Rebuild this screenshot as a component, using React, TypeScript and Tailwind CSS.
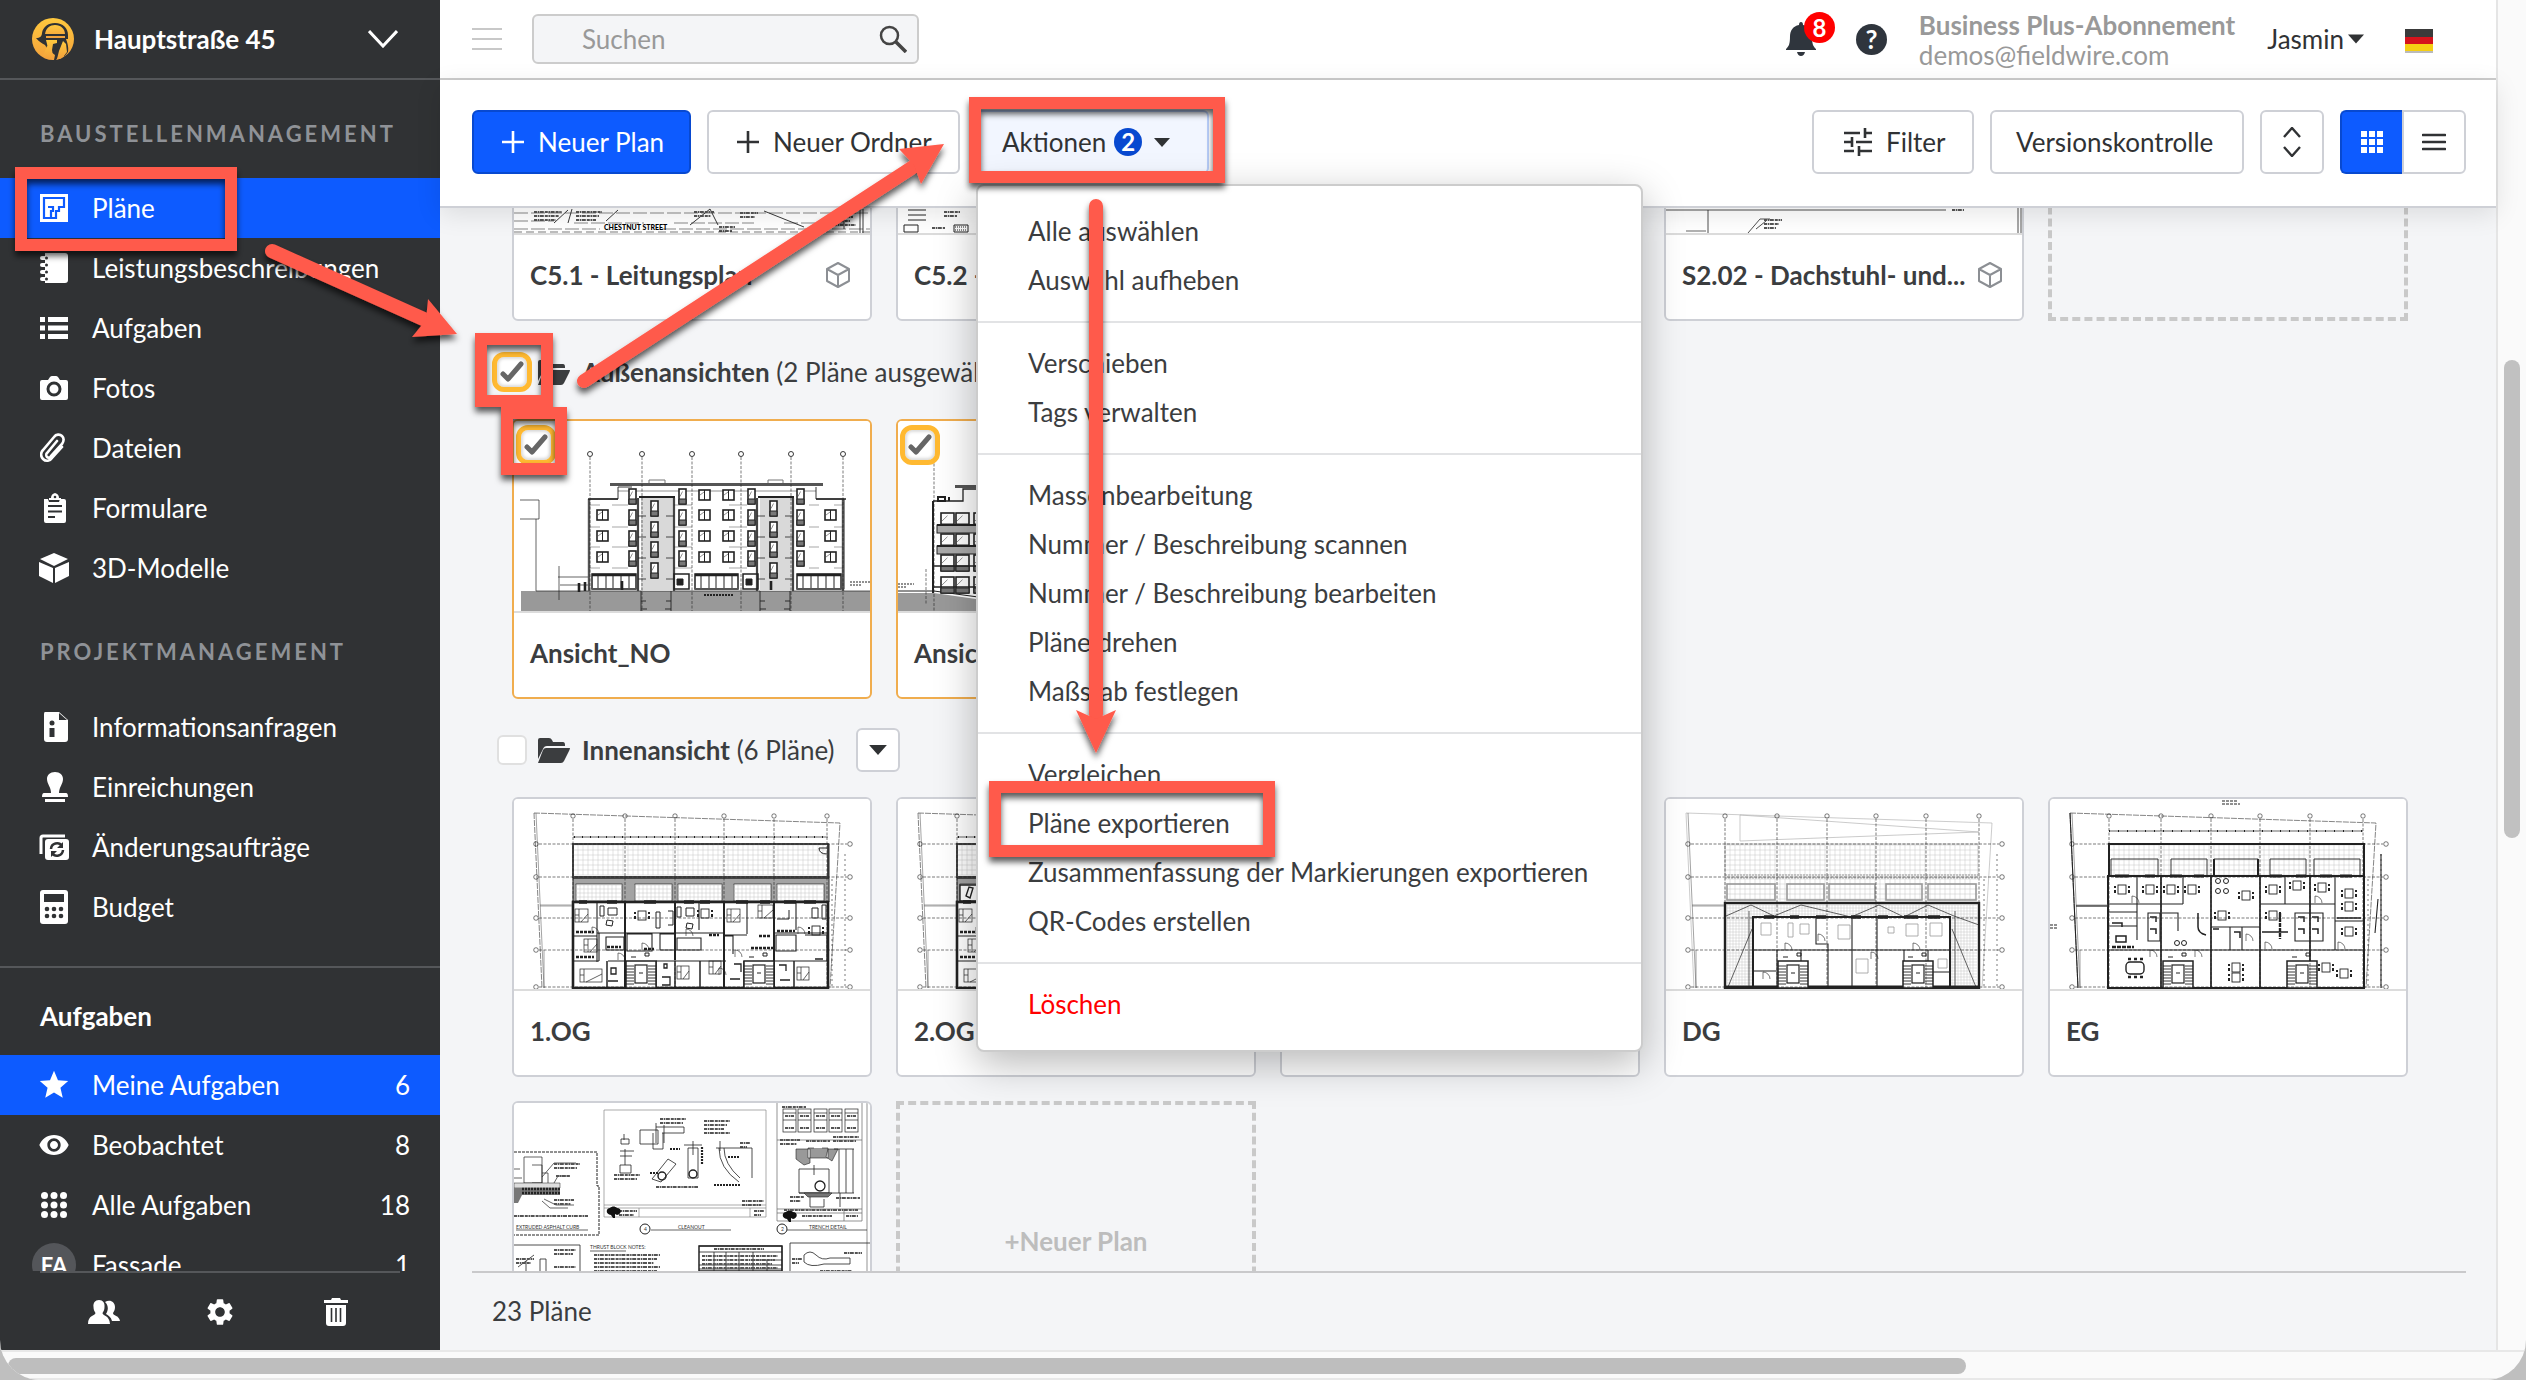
import React from "react";
import { MdSettings, MdStar, MdVisibility } from "react-icons/md";

type IconProps = { className?: string };

/* ---------- icons ---------- */

const Logo = () => (
  <svg viewBox="0 0 42 42" className="size-[42px]" aria-hidden="true">
    <defs>
      <linearGradient id="logoFill" x1="0" y1="0" x2="0" y2="1">
        <stop offset="0" stopColor="#ffc93e" />
        <stop offset="1" stopColor="#f3a13c" />
      </linearGradient>
    </defs>
    <circle cx="21" cy="21" r="21" fill="url(#logoFill)" />
    <path d="M4 20c4 0 6-2 6-5C11 9 16 5 23 5c8 0 13 5 13 12v4h-2c1 3 3 8 2 13l-4 5-1-9-4 8-3 4h-2l1-5-4-3c-3-1-4-4-6-7-3-2-6-3-9-7z" fill="#303234" />
    <path d="M13 16c1-6 5-9 10-9 6 0 10 4 10 9zM14 18h19v2H14z" fill="url(#logoFill)" />
    <path d="M14 22h11v3l-4 1-1 6-4-1-1-5zM15 28l5 4 1 6-4 3-6-3z" fill="url(#logoFill)" />
    <path d="M31 23l3 3 1 8-3 4-4 3h-3l2-8z" fill="url(#logoFill)" />
  </svg>
);

const PlanIcon = () => (
  <svg viewBox="0 0 28 28" className="size-7" aria-hidden="true">
    <path d="M0 0h28v28H0z" fill="#fff" />
    <path d="M24 14V4H4v20h12v-7h3v-5M8 13h5v4h-2v7M24 13h-5" fill="none" stroke="#0d5bff" strokeWidth="2.200" />
  </svg>
);
const NotebookIcon = () => (
  <svg viewBox="0 0 28 30" className="h-[30px] w-7" aria-hidden="true">
    <path d="M5 0h20a3 3 0 0 1 3 3v24a3 3 0 0 1-3 3H5z" fill="#fff" />
    {[4, 11, 18, 25].map((y) => (
      <g key={y}>
        <rect x="0" y={y - 1} width="8" height="4" rx="2" fill="#fff" />
        <circle cx="6.500" cy={y + 1} r="1.500" fill="#303234" />
      </g>
    ))}
  </svg>
);
const ListIcon = () => (
  <svg viewBox="0 0 28 22" className="h-[22px] w-7" fill="#fff" aria-hidden="true">
    {[0, 8.5, 17].map((y) => (
      <path key={y} d={`M0 ${y}h5v5H0zM8 ${y}h20v5H8z`} />
    ))}
  </svg>
);
const CameraIcon = () => (
  <svg viewBox="0 0 28 24" className="h-6 w-7" aria-hidden="true">
    <path d="M2 4h6l2-3q1-1 2-1h4q1 0 2 1l2 3h6q2 0 2 2v16q0 2-2 2H2q-2 0-2-2V6q0-2 2-2z" fill="#fff" />
    <circle cx="14" cy="13" r="6" fill="none" stroke="#303234" strokeWidth="3" />
  </svg>
);
const ClipIcon = () => (
  <svg viewBox="0 0 28 30" className="h-[30px] w-7" aria-hidden="true">
    <path d="M22 14 12 25c-2 3-6 4-9 1s-2-7 0-9L14 4c2-3 6-3 8-1s2 5 0 8L11 23c-1 2-3 2-4 1s-1-3 0-4l10-12" fill="none" stroke="#fff" strokeWidth="2.600" strokeLinecap="round" />
  </svg>
);
const ClipboardIcon = () => (
  <svg viewBox="0 0 28 30" className="h-[30px] w-7" aria-hidden="true">
    <path d="M4 6h4l1 3h10l1-3h4q2 0 2 2v20q0 2-2 2H6q-2 0-2-2V6z" fill="#fff" />
    <path d="M9 7V5h2q0-4 4-5 4 1 4 5h2v2z" fill="#fff" />
    <path d="M8 13h14M8 18.500h14M8 24h7" stroke="#303234" strokeWidth="2" />
    <circle cx="15" cy="4" r="1.300" fill="#303234" />
  </svg>
);
const BoxIcon = () => (
  <svg viewBox="0 0 30 30" className="size-[30px]" fill="#fff" aria-hidden="true">
    <path d="M15 0 29 6 15 13 1 6zM0 9l14 6v15L0 23zM30 9l-14 6v15l14-7z" />
  </svg>
);
const InfoFileIcon = () => (
  <svg viewBox="0 0 28 30" className="h-[30px] w-7" aria-hidden="true">
    <path d="M5 0h14l9 8v19a3 3 0 0 1-3 3H7a3 3 0 0 1-3-3V2q0-2 1-2z" fill="#fff" />
    <path d="M19 1v7h8" fill="#303234" />
    <circle cx="12" cy="11" r="2.500" fill="#303234" />
    <path d="M9.500 16h5v9h-5z" fill="#303234" />
  </svg>
);
const StampIcon = () => (
  <svg viewBox="0 0 28 30" className="h-[30px] w-7" fill="#fff" aria-hidden="true">
    <path d="M15 0c5 0 8 3 8 7 0 5-4 8-4 14h7q2 0 2 4H2q0-4 2-4h7c0-6-4-9-4-14 0-4 3-7 8-7zM5 27h20v3H5z" />
  </svg>
);
const ChangeIcon = () => (
  <svg viewBox="0 0 30 26" className="h-[26px] w-[30px]" aria-hidden="true">
    <path d="M26 2H4Q2 2 2 4v16" stroke="#fff" strokeWidth="3" fill="none" />
    <rect x="6" y="5" width="24" height="21" rx="3" fill="#fff" />
    <path d="M12 15a6 6 0 0 1 11-3M24 16a6 6 0 0 1-11 3" stroke="#303234" strokeWidth="2.500" fill="none" />
    <path d="M24 8v6h-6zM12 23v-6h6z" fill="#303234" />
  </svg>
);
const CalculatorIcon = () => (
  <svg viewBox="0 0 28 34" className="h-[34px] w-7" aria-hidden="true">
    <rect width="28" height="34" rx="3" fill="#fff" />
    <rect x="4" y="4" width="20" height="8" fill="#303234" />
    {[19, 26].map((y) => [7, 14, 21].map((x) => <circle key={`${x}-${y}`} cx={x} cy={y} r="2.300" fill="#303234" />))}
  </svg>
);
const StarIcon = () => <MdStar className="size-[34px] text-white" aria-hidden="true" />;
const EyeIcon = () => <MdVisibility className="size-8 text-white" aria-hidden="true" />;
const DotsIcon = () => (
  <svg viewBox="0 0 26 26" className="size-[26px]" fill="#fff" aria-hidden="true">
    {[3.5, 13, 22.5].map((y) => [3.5, 13, 22.5].map((x) => <circle key={`${x}-${y}`} cx={x} cy={y} r="3.500" />))}
  </svg>
);
const PeopleIcon = () => (
  <svg viewBox="0 0 32 24" className="h-6 w-8" fill="#fff" aria-hidden="true">
    <path d="M11 0c4 0 6 3 5.500 7 0 3-1 4-2 6 0 3 7 2 7.500 11H0c0-9 7-8 7.500-11-1-2-2-3-2-6C5 3 7 0 11 0z" />
    <path d="M17 2c5-3 10 0 10 5 0 3-1 4-2 6 0 3 6 2 7 8h-8c-1-4-4-6-6-7 3-5 2-9-1-12z" />
  </svg>
);
const TrashIcon = () => (
  <svg viewBox="0 0 24 28" className="h-7 w-6" aria-hidden="true">
    <path d="M0 2h7l1-2h8l1 2h7v3H0zM2 7h20v18q0 3-3 3H5q-3 0-3-3z" fill="#fff" />
    <path d="M7.500 10v14M12 10v14M16.500 10v14" stroke="#303234" strokeWidth="1.600" />
  </svg>
);
const Caret = ({ className }: IconProps) => (
  <svg viewBox="0 0 16 9" className={className} fill="currentColor" aria-hidden="true">
    <path d="M0 0h16L8 9z" />
  </svg>
);
const Plus = () => (
  <svg viewBox="0 0 22 22" className="size-[22px]" aria-hidden="true">
    <path d="M11 0v22M0 11h22" stroke="currentColor" strokeWidth="2.600" />
  </svg>
);
const CubeOutline = () => (
  <svg viewBox="0 0 24 26" className="h-[26px] w-6 shrink-0" fill="none" stroke="#8c8f94" strokeWidth="2" strokeLinejoin="round" aria-hidden="true">
    <path d="M12 1 23 7v12l-11 6L1 19V7zM1 7l11 6 11-6M12 13v12" />
  </svg>
);
const FolderIcon = () => (
  <svg viewBox="0 0 32 25" className="h-[25px] w-8" fill="#3b3d3f" aria-hidden="true">
    <path d="M0 21V2q0-2 2-2h9q2 0 3 2l1 2h10q2 0 2 3v1H9Q6 8 5 11z" />
    <path d="M8 10h24q0 1-1 3l-5 10q-1 2-3 2H0l5-13q1-2 3-2z" />
  </svg>
);

/* ---------- drawings ---------- */

type DrawProps = { children: React.ReactNode };
const Drawing = ({ children }: DrawProps) => (
  <svg viewBox="0 0 356 190" className="block h-[190px] w-full bg-white" preserveAspectRatio="xMinYMin slice" fill="none" stroke="#222" strokeWidth="1" aria-hidden="true">
    {children}
  </svg>
);

const Pane = ({ x, y, w, h }: { x: number; y: number; w: number; h: number }) => (
  <g>
    <rect x={x} y={y} width={w} height={h} strokeWidth="1.600" fill="#fff" />
    <path d={w > h ? `M${x + w / 2} ${y}v${h}` : `M${x} ${y + h - 5}h${w}v5h-${w}z`} fill="#777" />
    <path d={`M${x + 1} ${y + h / 2}l${w / 2 - 1}-${h / 3}`} strokeWidth="0.500" />
  </g>
);

const ElevationNorth = () => (
  <Drawing>
    <path d="M7 170h349v20H7z" fill="#999" stroke="none" />
    <path d="M22 170h334M22 98v72M6 79h19v19H6M45 145v34M44 156h30M46 164h28" strokeWidth="0.700" />
    <path d="M76 78h28V66h14M302 66v12h28v90" strokeWidth="0.900" />
    <path d="M75 78v92M329 78v92" strokeWidth="2.400" stroke="#555" />
    <path d="M74 78h30M302 78h30" strokeWidth="1.500" />
    <path d="M135 59h16v4h-16zM254 59h15v4h-15z" stroke="#777" />
    <path d="M96 63.500h213" strokeWidth="3" stroke="#555" />
    <path d="M104 70h198" strokeWidth="0.500" />
    {[127, 246].map((x) => (
      <g key={x}>
        <rect x={x} y="76" width="33" height="94" fill="#d9d9d9" stroke="none" />
        <path d={`M${x - 3} 77v93M${x + 33} 77v93`} stroke="#444" strokeWidth="2.200" />
        <path d={`M${x - 2} 76h36`} strokeWidth="2" />
        {[80, 101, 121, 142].map((y) => <Pane key={y} x={x + 10} y={y} w={7} h={15} />)}
        {[95, 116, 137, 158].map((y) => <path key={y} d={`M${x - 3} ${y}h8M${x + 25} ${y}h8`} strokeWidth="0.800" />)}
        <path d={`M${x} 170v20M${x + 30} 170v20M${x} 180h5M${x + 25} 180h5M${x} 188h6M${x + 24} 188h6`} strokeWidth="0.900" />
      </g>
    ))}
    {[68, 89, 110, 130].map((y) => [115, 165, 234, 283].map((x) => <Pane key={`${x}-${y}`} x={x} y={y} w={7} h={15} />))}
    {[69, 89, 110, 131].map((y) => [185, 209].map((x) => <Pane key={`${x}-${y}`} x={x} y={y} w={11} h={10} />))}
    {[89, 110, 131].map((y) => [83, 311].map((x) => <Pane key={`${x}-${y}`} x={x} y={y} w={11} h={10} />))}
    {[84, 106, 126, 147].map((y) => <path key={y} d={`M76 ${y}h10M98 ${y}h16M160 ${y}h18M215 ${y}h18M295 ${y}h10M320 ${y}h9`} strokeWidth="0.400" />)}
    {[[78, 44], [181, 43], [283, 44]].map(([x, w]) => (
      <g key={x}>
        <rect x={x} y="153" width={w} height="15" strokeWidth="1.500" fill="#fff" />
        <path d={`M${x} 154h${w}`} strokeWidth="2.500" />
        {[6, 14, 21, 29, 37].map((d) => <path key={d} d={`M${x + d} 153v15`} />)}
        <path d={`M${x} 168h${w}`} strokeWidth="2" stroke="#555" />
      </g>
    ))}
    {[160, 229].map((x) => (
      <g key={x}>
        <rect x={x} y="153" width="15" height="15" strokeWidth="1.500" />
        <path d={`M${x + 3} 158h6v6h-6z`} fill="#222" />
      </g>
    ))}
    {[[65, 162], [71, 161], [108, 160], [257, 160]].map(([x, y]) => <path key={x} d={`M${x} ${y}v9`} strokeWidth="2.600" />)}
    <path d="M190 174h30" strokeWidth="2" strokeDasharray="2 1" />
    <path d="M336 161h20M336 164h12" strokeWidth="1" strokeDasharray="2 1" />
    {[76, 128, 178, 227, 277, 329].map((x) => (
      <g key={x}>
        <circle cx={x} cy="33" r="2.500" strokeWidth="0.900" />
        <path d={`M${x} 36v154`} strokeWidth="0.600" strokeDasharray="3 1.500" />
      </g>
    ))}
  </Drawing>
);

const ElevationSide = () => (
  <Drawing>
    <path d="M0 172h36l42 6h278v12H0z" fill="#999" stroke="none" />
    <path d="M0 170h36l44 6h276" />
    <path d="M36 20v170M28 148v36" strokeWidth="0.600" strokeDasharray="3 1.500" />
    <path d="M35 80h30V68h30M57 66h240" strokeWidth="1.300" />
    <path d="M57 65.500h240" strokeWidth="3" stroke="#555" />
    <path d="M35 80v92" strokeWidth="2" />
    {[92, 113, 134, 156].map((y) => [43, 58, 76, 110].map((x) => <Pane key={`${x}-${y}`} x={x} y={y} w={13} h={16} />))}
    {[104, 125].map((y) => (
      <g key={y}>
        <rect x="39" y={y} width="120" height="8" fill="#aaa" />
        <path d={`M39 ${y}h120`} strokeWidth="2" />
      </g>
    ))}
    <path d="M35 145h120M35 166h120" strokeWidth="1.600" />
    <path d="M40 76h7v4h-7zM51 76v4" strokeWidth="2" />
    <path d="M0 163h16M0 166h8" strokeDasharray="2 1" />
  </Drawing>
);

const axisX = [59, 111, 161, 210, 260, 313];
const axisY = [45, 78, 119, 151, 188];

const SiteAxes = ({ light }: { light?: boolean }) => (
  <g strokeWidth="0.600">
    <path d="M20 14 326 24 316 189M20 14l8 175" stroke={light ? "#aaa" : "#333"} strokeDasharray={light ? undefined : "6 1"} />
    <path d="M22 14l8 175M26 106h32M30 151v38M26 107h32" stroke="#666" />
    <path d="M331 55v134M318 80v108" strokeDasharray="2 3" />
    {axisX.map((x) => (
      <g key={x}>
        <circle cx={x} cy="17" r="2.200" />
        <path d={`M${x} 20v168`} strokeDasharray="3 1.500" />
      </g>
    ))}
    {axisY.map((y) => (
      <g key={y}>
        <circle cx="22" cy={y} r="2.300" />
        <circle cx="336" cy={y} r="2.300" />
        <path d={`M25 ${y}h308`} strokeDasharray="3 1.500" />
      </g>
    ))}
  </g>
);

const Tiles = ({ x, y, w, h, step = 5 }: { x: number; y: number; w: number; h: number; step?: number }) => {
  const v = Array.from({ length: Math.floor(w / step) }, (_, i) => `M${x + i * step} ${y}v${h}`).join("");
  const hz = Array.from({ length: Math.floor(h / step) + 1 }, (_, i) => `M${x} ${y + i * step}h${w}`).join("");
  return <path d={v + hz} stroke="#c4c4c4" strokeWidth="0.500" />;
};

const Stairs = ({ x }: { x: number }) => (
  <g>
    <rect x={x} y="162" width="30" height="27" fill="#fff" strokeWidth="1.500" />
    <rect x={x + 9} y="166" width="12" height="18" strokeWidth="1.200" />
    {[167, 170, 173, 176, 179, 182, 185].map((y) => <path key={y} d={`M${x} ${y}h8M${x + 22} ${y}h8`} strokeWidth="0.900" />)}
    <path d={`M${x + 5} 158h5M${x + 19} 154h4v3h-4zM${x + 13} 174h4`} strokeWidth="1" />
  </g>
);

const Door = ({ x, y }: { x: number; y: number }) => <path d={`M${x} ${y}v-7a7 7 0 0 1 7 7`} strokeWidth="0.600" />;

const Table = ({ x, y }: { x: number; y: number }) => (
  <g strokeWidth="0.900">
    <rect x={x} y={y} width="8" height="9" />
    <path d={`M${x - 3} ${y + 1}v2M${x - 3} ${y + 5}v3M${x + 11} ${y + 1}v2M${x + 11} ${y + 5}v3`} strokeWidth="2" />
  </g>
);

const Bed = ({ x, y, w = 13 }: { x: number; y: number; w?: number }) => (
  <g strokeWidth="0.700">
    <rect x={x} y={y} width={w} height="13" />
    <path d={`M${x + 4} ${y}v13M${x} ${y + 6}h4M${x + 6} ${y + 13}l${w - 6}-8`} />
  </g>
);

const PlanUpper = ({ lounger }: { lounger?: boolean }) => (
  <Drawing>
    <Tiles x={59} y={46} w={256} h={30} />
    <rect x="59" y="45" width="255" height="33" stroke="#333" strokeWidth="1.800" />
    <path d="M59 79h256v24H59z" fill="#a3a3a3" stroke="none" />
    <path d="M59 78.500h256" strokeWidth="3" stroke="#444" />
    {[[62, 46], [121, 37], [164, 44], [220, 37], [263, 47]].map(([x, w]) => (
      <g key={x}>
        <rect x={x} y="85" width={w} height="17" fill="#fff" strokeWidth="0.700" />
        <Tiles x={x} y={86} w={w} h={15} step={4} />
      </g>
    ))}
    {lounger && <path d="M62 86h40v16H62zM68 97l3-9 4 1-3 10z" fill="#fff" strokeWidth="1.400" />}
    <path d="M59 38h255" strokeWidth="0.700" />
    <path d="M60 38h254" strokeWidth="2" strokeDasharray="1 7" />
    <path d="M59 78v25M315 45v58M305 49h8M305 49q0 6 8 6" />
    <rect x="59" y="103" width="255" height="86" strokeWidth="2.600" />
    <path d="M65 103h8M93 103h10M130 103h12M170 103h10M186 103h10M222 103h12M246 103h10M270 103h12M290 103h12" strokeWidth="3.600" />
    <path d="M111 103v86M161 103v58M210 103v86M260 103v86" strokeWidth="2" />
    <path d="M83 103v60M185 103v28M233 103v32M282 103v28" strokeWidth="1.100" />
    <path d="M59 137h24M83 134h128M210 136h23M260 134h54M59 162h26M85 134v28M92 138h18v13H92zM113 135h25v17h-25zM146 135h15v16h-15zM163 139h24v12h-24zM210 137h9v18M262 136h20v16h-20zM291 136h22v26h-22M94 162h18M142 162h70M260 162h54" strokeWidth="1.100" />
    <path d="M93 162v27M142 162v27M161 162v27M186 162v27M230 162v27M280 162v27" strokeWidth="1.500" />
    <Bed x={61} y={110} /><Bed x={213} y={110} /><Bed x={70} y={140} /><Bed x={66} y={170} w={22} />
    <Bed x={195} y={162} w={12} /><Bed x={283} y={168} w={12} /><Bed x={163} y={167} w={12} /><Bed x={244} y={106} w={15} />
    <Table x={124} y={112} /><Table x={187} y={110} /><Table x={298} y={127} />
    <path d="M86 107h4v10h-4zM94 109h9v7h-9zM93 121l6 1-1 5-6-1zM142 113h4v16h-4zM154 112h5v14h-5M163 108h4v10h-4zM172 109h8v8h-8zM173 124l6 1-1 5-6-1zM263 120h12v-9M298 109h6v10h-6zM308 106h4v14h-4z" />
    <path d="M93 148h14M130 150h10M195 136h10M237 149h22M245 137h12M263 132h18M62 133h18M62 158h18" strokeWidth="2.600" strokeDasharray="3 1" />
    <path d="M97 169h5v6h-5zM94 182h10M150 165h3v4h-3zM148 178h8v8h-8M220 165h7v8M216 180h10M265 166h7v6M266 181h10M301 160h8" strokeWidth="1.300" />
    <Door x={78} y={135} /><Door x={104} y={161} /><Door x={128} y={151} /><Door x={172} y={137} /><Door x={221} y={158} /><Door x={284} y={135} /><Door x={205} y={176} />
    <Stairs x={112} /><Stairs x={230} />
    <SiteAxes />
  </Drawing>
);

const PlanAttic = () => (
  <Drawing>
    <Tiles x={59} y={46} w={253} h={30} />
    <path d="M59 45h253v33H59zM74 16v26L313 33 74 16" stroke="#b5b5b5" strokeWidth="0.700" />
    <path d="M59 76h253M59 79h253" stroke="#999" strokeDasharray="2 1" />
    <Tiles x={59} y={80} w={253} h={22} />
    {[[61, 48], [121, 37], [163, 46], [220, 36], [262, 48]].map(([x, w]) => (
      <rect key={x} x={x} y="85" width={w} height="16" stroke="#999" strokeWidth="1.600" />
    ))}
    <Tiles x={61} y={106} w={250} h={80} step={3} />
    <rect x="59" y="104" width="254" height="85" strokeWidth="2.400" />
    <path d="M60 117 85 106l23 11 27-11 50 12 28-12 25 12 24-12 26 11 25 9" strokeWidth="0.700" />
    <path d="M62 188 86 130M310 188 286 130M83 112v76M289 112v76" strokeWidth="0.700" />
    <rect x="87" y="118" width="197" height="71" fill="#fff" strokeWidth="2" />
    <path d="M98 118h10M124 118h9M150 118h10M185 118h10M212 118h10M238 118h14M262 118h12" strokeWidth="3.600" />
    <path d="M150 118v27h12v44M186 118v71M211 118v71M87 151h124M211 151h73M111 151v38M135 151v38M238 151v38M262 151v38M88 172h22M262 173h22" strokeWidth="1.100" />
    <path d="M95 124h10v12H95zM122 124h5v14h-5zM134 125h9v10h-9zM172 126h12v14h-12zM222 128h6v6h-6zM240 125h12v12h-12zM264 124h12v13h-12zM190 160h12v14h-12zM272 160h9v9h-9z" stroke="#999" strokeWidth="0.800" />
    <path d="M60 188h253" strokeWidth="3" />
    <Door x={119} y={151} /><Door x={152} y={142} /><Door x={247} y={151} /><Door x={97} y={180} /><Door x={205} y={160} />
    <Stairs x={112} /><Stairs x={237} />
    <SiteAxes light />
  </Drawing>
);

const PlanGround = () => (
  <Drawing>
    <path d="M172 2h16M172 5h18M0 126h8M0 129h8" strokeWidth="1.200" strokeDasharray="3 1" />
    <Tiles x={59} y={46} w={254} h={30} />
    <path d="M59 32h254" strokeWidth="0.700" />
    <path d="M59 32h254" strokeWidth="2" strokeDasharray="1 8" />
    <path d="M59 77V45h255v32" strokeWidth="2" />
    {[[61, 47], [121, 36], [164, 44], [220, 36], [264, 46]].map(([x, w]) => <path key={x} d={`M${x} 76V60h${w}v16`} strokeWidth="0.900" />)}
    <path d="M164 60v16M208 60v16M58 77h256v112H58z" strokeWidth="2" />
    <path d="M65 77h14M95 77h10M120 77h12M144 77h10M220 77h12M246 77h10M270 77h12M290 77h12" strokeWidth="3.200" />
    <path d="M111 77v112M161 77v112M210 77v112M260 77v112" strokeWidth="1.700" />
    <path d="M87 77v64M133 77v28M235 77v28M285 77v74M59 105h28M87 105h46M161 128h49M210 105h50M260 105h25M59 127h28M285 122h28M59 151h254M59 113h28M98 114h12v28H98zM112 114h16v18M180 128v23M192 128v23M245 114h28v28h-28z" strokeWidth="1.100" />
    {[[68, 86], [96, 86], [117, 86], [138, 86], [192, 92], [219, 86], [243, 82], [268, 84], [295, 90], [295, 103], [219, 112], [295, 128], [272, 164], [290, 170], [182, 164], [182, 174], [168, 112]].map(([x, y]) => <Table key={`${x}-${y}`} x={x} y={y} />)}
    {[[168, 82], [176, 82], [168, 92], [176, 92], [127, 144], [134, 144]].map(([x, y]) => <circle key={`${x}-${y}`} cx={x} cy={y} r="2.500" />)}
    <rect x="76" y="163" width="18" height="12" rx="4" strokeWidth="1.400" />
    {[79, 85, 91].map((x) => <path key={x} d={`M${x - 1} 160h3M${x - 1} 178h3`} strokeWidth="2.600" />)}
    <path d="M100 118h6v5M100 130h6v5M248 118h6v5M262 118h6v5M248 130h6v5M262 130h6v5M66 137h10v6H66zM62 124h10v4M148 114v14q0 6 8 8M212 133h26M287 119h24M163 130h6M184 133h6v6" strokeWidth="1.500" />
    <path d="M230 114v26M62 148h22M218 190h34M62 190h46M163 190h46M262 190h50" strokeWidth="2.400" strokeDasharray="4 1" />
    <Door x={82} y={104} /><Door x={100} y={158} /><Door x={145} y={158} /><Door x={196} y={142} /><Door x={215} y={150} /><Door x={265} y={104} /><Door x={288} y={150} />
    <Stairs x={113} /><Stairs x={237} />
    <SiteAxes />
    <path d="M20 14l8 175M26 107h32M331 55v134M328 100l-3 34" strokeWidth="1.100" />
  </Drawing>
);

const Scribble = ({ x, y, w, rows = 1 }: { x: number; y: number; w: number; rows?: number }) => (
  <g>
    {Array.from({ length: rows }, (_, i) => (
      <path key={i} d={`M${x} ${y + i * 4}h${w - (i % 3) * 3}`} strokeWidth="1.800" stroke="#555" strokeDasharray="3 0.700 1.500 0.600 4 1" />
    ))}
  </g>
);

const DetailSheet = () => (
  <Drawing>
    <g strokeWidth="0.700">
      <path d="M90 7h162v107H90zM90 102h162M90 105h162M125 105v9M236 105v9" stroke="#888" />
      <path d="M263 0v118h85V0M353 0v168M263 106h85M263 110h85M330 106v12M263 37h85" stroke="#666" />
      <path d="M0 49h83v34h2v49H0" strokeDasharray="3 1" strokeWidth="1" />
      <path d="M10 54h18v26H10zM18 62h10v18H18M28 70h6v10M28 74l12-14h22M40 80l4-7h12M30 96l12 6h18M28 98l8 7h18M0 66h6M0 75h8" />
    </g>
    <path d="M0 80h46v5H0z" fill="#ddd" strokeWidth="0.500" />
    <path d="M0 85h46v7H8l-4 8H0z" fill="#777" stroke="none" />
    <path d="M8 86h38M8 90h38" strokeWidth="2.500" strokeDasharray="2 1" />
    <Scribble x={40} y={61} w={26} rows={2} /><Scribble x={42} y={73} w={14} /><Scribble x={40} y={97} w={20} rows={2} /><Scribble x={0} y={113} w={74} />
    <Scribble x={146} y={16} w={26} rows={2} /><Scribble x={190} y={18} w={26} rows={4} /><Scribble x={100} y={72} w={26} rows={2} /><Scribble x={142} y={84} w={42} />
    <Scribble x={228} y={98} w={22} rows={2} /><Scribble x={105} y={108} w={18} rows={2} /><Scribble x={240} y={108} w={10} rows={2} /><Scribble x={226} y={40} w={10} rows={2} />
    <g strokeWidth="0.800">
      <path d="M126 27h18v14h-18zM142 20v20M150 22v18M142 24h28v6h-22M139 30v16h10V30M110 31v6M107 36h8v5h-8zM111 46v16M106 48h14M106 53h12M106 62h11v8h-11z" />
      <path d="M174 45v30h10V45zM179 38v14M170 42h18M210 45q0 16 16 30M205 45q0 20 20 34M206 38v10M202 45h14M216 45h22v30M138 76l16-20 8 5-15 18z" />
    </g>
    <circle cx="179" cy="71" r="4" strokeWidth="1.500" /><circle cx="148" cy="73" r="4" strokeWidth="1.500" />
    <path d="M188 44v18M156 46h10M214 54h12M200 82h26M136 70h8" strokeWidth="2.200" strokeDasharray="2 1" />
    <path d="M97 112c-6-1-5-7-1-7 2-2 5-2 7 0 5 0 5 6 0 7l-2-1v4h-2zM273 116c-6-1-5-7-1-7 2-2 5-2 7 0 5 0 5 6 0 7l-2-1v4h-2z" fill="#111" stroke="none" />
    {[269, 284, 300, 315, 331].map((x) => (
      <g key={x}>
        <rect x={x} y="6" width="13" height="23" strokeWidth="0.700" />
        <path d={`M${x} 10h13M${x} 17h13`} strokeWidth="0.700" />
        <Scribble x={x + 2} y={13} w={9} /><Scribble x={x + 2} y={25} w={9} />
      </g>
    ))}
    <Scribble x={268} y={4} w={24} /><Scribble x={319} y={34} w={26} rows={2} /><Scribble x={266} y={37} w={20} rows={2} /><Scribble x={292} y={38} w={24} />
    <path d="M282 46h14v14l-6 2-8-6zM314 46h10l-6 12-6-4zM300 45h-6v10h20V45h-6" fill="#999" strokeWidth="0.600" />
    <path d="M285 66h30v24h-30zM300 62v10M325 46v44M332 46v44M339 46v44M320 46h20M285 90h55M296 94v10h14v-8M326 90v14" strokeWidth="0.800" />
    <circle cx="306" cy="83" r="5" strokeWidth="1.300" />
    <path d="M290 90h28l-4 4h-20z" fill="#777" strokeWidth="0.600" />
    <Scribble x={288} y={113} w={30} /><Scribble x={276} y={94} w={14} rows={2} /><Scribble x={322} y={95} w={24} />
    <Scribble x={270} y={107} w={74} /><Scribble x={332} y={113} w={12} />
    <g fill="#333" stroke="none" fontFamily="Lato, sans-serif" fontSize="5">
      <text x="2" y="126">EXTRUDED ASPHALT CURB</text>
      <text x="164" y="126">CLEANOUT</text>
      <text x="295" y="126">TRENCH DETAIL</text>
      <text x="130" y="128">4</text>
      <text x="267" y="128">2</text>
      <text x="76" y="146">THRUST BLOCK NOTES:</text>
    </g>
    <path d="M2 127h72M137 127h80M273 127h80M76 148h36" strokeWidth="0.700" />
    <circle cx="131" cy="126" r="5" /><circle cx="268" cy="126" r="5" />
    <Scribble x={80} y={152} w={66} rows={5} />
    <path d="M0 142h66v30M4 164l16-12M26 168v-12h6v12M12 168V158M356 140h-80v30M185 143h83v27M185 149h83M200 149v21M212 149v21M225 149v21M239 149v21M239 157h29M185 162h83M185 166h83M253 157v12" strokeWidth="0.800" />
    <path d="M185 143h83v25h-83z" strokeWidth="1.500" />
    <Scribble x={200} y={146} w={50} /><Scribble x={188} y={153} w={76} rows={4} /><Scribble x={2} y={156} w={18} rows={2} /><Scribble x={40} y={147} w={22} rows={2} /><Scribble x={40} y={164} w={22} />
    <path d="M290 152q6-6 12 0t14 3h20v6h-26q-14 4-20-2z" strokeWidth="0.800" />
    <Scribble x={278} y={156} w={10} rows={2} /><Scribble x={330} y={150} w={18} /><Scribble x={306} y={168} w={32} />
  </Drawing>
);

const UtilitySheet = () => (
  <Drawing>
    <path d="M0 170h356M0 186h86M148 186h208M0 178h40M60 180h70M160 180h80M270 180h60" strokeWidth="0.700" strokeDasharray="14 3" stroke="#555" />
    <path d="M40 180l14-13M92 178l12-11M58 166l-4 14M196 166l8 16M250 168l40 16M330 186V166M346 190V166M349 166v24M176 182l20-16" strokeWidth="0.900" />
    <Scribble x={20} y={169} w={28} rows={3} /><Scribble x={62} y={169} w={26} rows={3} /><Scribble x={180} y={169} w={20} rows={2} /><Scribble x={226} y={170} w={18} rows={2} /><Scribble x={205} y={184} w={16} rows={2} /><Scribble x={320} y={170} w={22} rows={4} />
    <text x="90" y="187" fontSize="7" fontWeight="900" fontFamily="Lato, sans-serif" fill="#000" stroke="none">CHESTNUT STREET</text>
    <path d="M0 189h356" strokeDasharray="8 4" strokeWidth="0.600" />
  </Drawing>
);

const LegendSheet = () => (
  <Drawing>
    <path d="M10 167h18M10 172h18M10 177h18M6 182h14v7H6zM56 182h14v7H56z" />
    <path d="M57 184h12M57 187h12" strokeDasharray="1 1" />
    <Scribble x={46} y={169} w={16} rows={2} /><Scribble x={34} y={185} w={13} />
  </Drawing>
);

const FramingSheet = () => (
  <Drawing>
    <path d="M0 167h280M82 190l12-14h10M90 186l10-8M42 167v23M352 165v25M355 165v25" strokeWidth="0.800" />
    <path d="M20 188h20" strokeWidth="0.700" />
    <Scribble x={98} y={177} w={18} rows={3} /><Scribble x={286} y={167} w={12} />
  </Drawing>
);

/* ---------- building blocks ---------- */

type CheckProps = { label: string; checked?: boolean };
const Check = ({ label, checked }: CheckProps) => (
  <label className="relative grid size-10 shrink-0 place-items-center">
    <input
      type="checkbox"
      aria-label={label}
      defaultChecked={checked}
      className="peer size-[30px] appearance-none rounded-md border-2 border-[#e0e0e0] bg-white checked:size-10 checked:rounded-xl checked:border-[5px] checked:border-[#ffb931] checked:shadow-[inset_0_0_3px_2px_#dcdcdc]"
    />
    <svg viewBox="0 0 24 22" className="pointer-events-none absolute hidden h-[22px] w-6 peer-checked:block" fill="none" stroke="#666" strokeWidth="5" strokeLinecap="round" strokeLinejoin="round" aria-hidden="true">
      <path d="M3 13l5 5L21 3" />
    </svg>
  </label>
);

type Plan = { title: string; art: React.ReactNode; selected?: boolean; model?: boolean };

const PlanCard = ({ title, art, selected, model }: Plan) => (
  <article
    className={
      selected
        ? "relative h-[280px] w-[360px] overflow-hidden rounded-md border-2 border-[#f0ad4e] bg-white"
        : "relative h-[280px] w-[360px] overflow-hidden rounded-md border-2 border-[#ced0d6] bg-white"
    }
  >
    {art}
    <div className="flex h-[84px] items-center justify-between border-t-2 border-[#dcdcdc] pr-5 pb-0.5 pl-4">
      <h3 className="text-[26px] leading-8 font-bold whitespace-nowrap text-[#3b3d3f]">{title}</h3>
      {model && <CubeOutline />}
    </div>
    {selected && (
      <div className="absolute top-1 left-0.5">
        <Check label={title} checked />
      </div>
    )}
  </article>
);

const NewPlanCard = () => (
  <button type="button" className="h-[280px] w-[360px] border-4 border-dashed border-[#c9c9c9] text-[26px] leading-8 font-bold text-[#bdbdbd]">
    +Neuer Plan
  </button>
);

type GroupProps = { name: string; count: string; checked?: boolean };
const GroupHeader = ({ name, count, checked }: GroupProps) => (
  <header className="flex h-[98px] items-center pt-1 pl-[52px] text-[26px] leading-8 text-[#3b3d3f]">
    <Check label={name} checked={checked} />
    <span className="ml-1.5 flex items-center gap-3 whitespace-nowrap">
      <FolderIcon />
      <span>
        <strong className="font-bold">{name}</strong> {count}
      </span>
    </span>
    <button type="button" aria-label={`${name}: Optionen`} className="ml-[22px] grid size-11 place-items-center rounded-md border-2 border-[#ced0d6] bg-white">
      <Caret className="h-2.5 w-[18px] text-[#303234]" />
    </button>
  </header>
);

const CardGrid = ({ children }: DrawProps) => <div className="flex flex-wrap gap-6 px-[72px]">{children}</div>;

type NavItem = { label: string; icon: React.ReactNode; count?: string; active?: boolean };
const NavRow = ({ label, icon, count, active }: NavItem) => (
  <li>
    <a
      href="#"
      aria-current={active ? "page" : undefined}
      className={
        active
          ? "flex h-[60px] items-center bg-[#0d5bff] pr-[30px] text-[26px] text-white"
          : "flex h-[60px] items-center pr-[30px] text-[26px] text-white"
      }
    >
      <span className="ml-8 grid w-11 shrink-0 place-items-center">{icon}</span>
      <span className="ml-4 flex-1 whitespace-nowrap">{label}</span>
      {count && <span>{count}</span>}
    </a>
  </li>
);

const siteItems: NavItem[] = [
  { label: "Pläne", icon: <PlanIcon />, active: true },
  { label: "Leistungsbeschreibungen", icon: <NotebookIcon /> },
  { label: "Aufgaben", icon: <ListIcon /> },
  { label: "Fotos", icon: <CameraIcon /> },
  { label: "Dateien", icon: <ClipIcon /> },
  { label: "Formulare", icon: <ClipboardIcon /> },
  { label: "3D-Modelle", icon: <BoxIcon /> },
];
const projectItems: NavItem[] = [
  { label: "Informationsanfragen", icon: <InfoFileIcon /> },
  { label: "Einreichungen", icon: <StampIcon /> },
  { label: "Änderungsaufträge", icon: <ChangeIcon /> },
  { label: "Budget", icon: <CalculatorIcon /> },
];
const taskItems: NavItem[] = [
  { label: "Meine Aufgaben", icon: <StarIcon />, count: "6", active: true },
  { label: "Beobachtet", icon: <EyeIcon />, count: "8" },
  { label: "Alle Aufgaben", icon: <DotsIcon />, count: "18" },
  {
    label: "Fassade",
    icon: <span className="grid size-11 place-items-center rounded-full bg-[#54565a] text-[22px] font-bold">FA</span>,
    count: "1",
  },
];

const Sidebar = () => (
  <aside className="flex w-[440px] shrink-0 flex-col bg-[#303234] text-white">
    <button type="button" className="flex h-20 shrink-0 items-center border-b-2 border-[#55575a] pr-[42px] pl-8">
      <Logo />
      <span className="ml-5 flex-1 text-left text-[26px] font-bold">Hauptstraße 45</span>
      <svg viewBox="0 0 30 18" className="h-[18px] w-[30px]" fill="none" stroke="#fff" strokeWidth="3" aria-hidden="true">
        <path d="M1 1l14 15L29 1" />
      </svg>
    </button>
    <nav aria-label="Projekt" className="flex min-h-0 flex-1 flex-col overflow-hidden">
      <h2 className="flex h-[98px] shrink-0 items-center pt-2 pl-10 text-[22px] font-bold tracking-[3px] text-[#8f9297]">BAUSTELLENMANAGEMENT</h2>
      <ul className="shrink-0">{siteItems.map((item) => <NavRow key={item.label} {...item} />)}</ul>
      <h2 className="flex h-[99px] shrink-0 items-center pt-2 pl-10 text-[22px] font-bold tracking-[3px] text-[#8f9297]">PROJEKTMANAGEMENT</h2>
      <ul className="shrink-0">{projectItems.map((item) => <NavRow key={item.label} {...item} />)}</ul>
      <h2 className="mt-[29px] flex h-[89px] shrink-0 items-center border-t-2 border-[#55575a] pt-2.5 pl-10 text-[26px] font-bold">Aufgaben</h2>
      <ul className="shrink-0">{taskItems.map((item) => <NavRow key={item.label} {...item} />)}</ul>
    </nav>
    <div className="ml-10 grid h-[79px] w-[360px] shrink-0 grid-cols-3 place-items-center border-t-2 border-[#55575a] pr-1.5 pl-1.5">
      <button type="button" aria-label="Personen"><PeopleIcon /></button>
      <button type="button" aria-label="Einstellungen"><MdSettings className="size-8" /></button>
      <button type="button" aria-label="Papierkorb"><TrashIcon /></button>
    </div>
  </aside>
);

const TopBar = () => (
  <header className="flex h-20 shrink-0 items-center border-b-2 border-[#cccccc] bg-white pr-[62px] pl-8">
    <button type="button" aria-label="Navigation" className="w-[30px]">
      <svg viewBox="0 0 30 22" className="h-[22px] w-[30px]" stroke="#c8c8c8" strokeWidth="2" aria-hidden="true">
        <path d="M0 1h30M0 11h30M0 21h30" />
      </svg>
    </button>
    <label className="relative ml-[30px] block w-[387px]">
      <input type="search" aria-label="Suchen" placeholder="Suchen" className="block h-[50px] w-full rounded-md border-2 border-[#cccccc] bg-[#f4f5f7] pr-14 pl-12 text-[26px] placeholder:text-[#999999]" />
      <svg viewBox="0 0 28 28" className="pointer-events-none absolute top-[11px] right-3 size-7" fill="none" stroke="#444" aria-hidden="true">
        <circle cx="10.500" cy="10.500" r="8.500" strokeWidth="2.500" />
        <path d="M17 17l10 10" strokeWidth="3.500" />
      </svg>
    </label>
    <div className="ml-auto flex items-center">
      <button type="button" aria-label="8 Benachrichtigungen" className="relative">
        <svg viewBox="0 0 30 34" className="h-[34px] w-[30px]" fill="#2f353d" aria-hidden="true">
          <path d="M13 3q0-3 2-3t2 3c6 1 9 6 9 11 0 8 1 10 4 13v1H0v-1c3-3 4-5 4-13C4 9 7 4 13 3zM11 30h8q-1 4-4 4t-4-4z" />
        </svg>
        <span className="absolute -top-2.5 left-[18px] grid size-[31px] place-items-center rounded-full bg-[#ff0000] text-[24px] leading-none font-bold text-white">8</span>
      </button>
      <button type="button" aria-label="Hilfe" className="ml-10 grid size-[31px] place-items-center rounded-full bg-[#2f353d] text-[26px] leading-none font-bold text-white">?</button>
      <div className="ml-8 pt-0.5 text-[26px] leading-[30px] whitespace-nowrap text-[#999999]">
        <p className="font-bold">Business Plus-Abonnement</p>
        <p>demos@fieldwire.com</p>
      </div>
      <button type="button" className="ml-8 flex items-center gap-1 text-[26px] text-[#303234]">
        Jasmin <Caret className="h-2.5 w-4" />
      </button>
      <button type="button" aria-label="Deutsch" className="ml-10 pt-1">
        <svg viewBox="0 0 30 26" className="h-[26px] w-[30px]" aria-hidden="true">
          <path d="M1 1h28v24H1z" fill="#bbb" />
          <path d="M1 1h28v8H1z" fill="#3a3a3a" />
          <path d="M1 9h28v7H1z" fill="#d5131c" />
          <path d="M1 16h28v7H1z" fill="#f5cf13" />
        </svg>
      </button>
    </div>
  </header>
);

const menuGroups = [
  ["Alle auswählen", "Auswahl aufheben"],
  ["Verschieben", "Tags verwalten"],
  ["Massenbearbeitung", "Nummer / Beschreibung scannen", "Nummer / Beschreibung bearbeiten", "Pläne drehen", "Maßstab festlegen"],
  ["Vergleichen", "Pläne exportieren", "Zusammenfassung der Markierungen exportieren", "QR-Codes erstellen"],
  ["Löschen"],
];

const ActionsMenu = () => (
  <div role="menu" className="absolute top-full left-0 z-20 mt-2.5 w-[667px] rounded-lg border-2 border-[#cccccc] bg-white py-[21px] shadow-[0_12px_40px_rgba(0,0,0,0.28)]">
    {menuGroups.map((group, i) => (
      <div key={group[0]} role="group" className={i > 0 ? "mt-4 border-t-2 border-[#e2e3e5] pt-4" : ""}>
        {group.map((label) => (
          <button
            key={label}
            type="button"
            role="menuitem"
            className={
              label === "Löschen"
                ? "block h-[49px] w-full px-[50px] text-left text-[26px] text-[#ff0000]"
                : "block h-[49px] w-full px-[50px] text-left text-[26px] text-[#3b3d3f]"
            }
          >
            {label}
          </button>
        ))}
      </div>
    ))}
  </div>
);

const outlineButton = "flex h-16 items-center rounded-md border-2 border-[#ced0d6] bg-white text-[26px] whitespace-nowrap text-[#303234]";

const Toolbar = () => (
  <div className="relative z-10 flex h-32 shrink-0 items-start gap-4 border-b-2 border-[#ced0d6] bg-white pt-[30px] pr-[30px] pl-8 shadow-[0_6px_24px_rgba(0,0,0,0.1)]">
    <button type="button" className="flex h-16 w-[219px] items-center gap-3.5 rounded-md border-2 border-[#0849d0] bg-[#0d5bff] pl-7 text-[26px] whitespace-nowrap text-white">
      <Plus /> Neuer Plan
    </button>
    <button type="button" className={`${outlineButton} w-[253px] gap-3.5 pl-7`}>
      <Plus /> Neuer Ordner
    </button>
    <div className="relative">
      <button type="button" aria-haspopup="menu" aria-expanded="true" className="flex h-16 w-[233px] items-center rounded-md border-2 border-[#b9cffb] bg-[#f2f6ff] pl-6 text-[26px] text-[#303234]">
        Aktionen
        <span className="mr-3 ml-2 grid size-7 place-items-center rounded-full bg-[#0849d0] text-[24px] leading-none font-bold text-white">2</span>
        <Caret className="h-[9px] w-4" />
      </button>
      <ActionsMenu />
    </div>
    <div className="ml-auto flex gap-4">
      <button type="button" className={`${outlineButton} w-[162px] gap-3.5 pl-[30px]`}>
        <svg viewBox="0 0 28 28" className="size-7" stroke="currentColor" strokeWidth="2.600" aria-hidden="true">
          <path d="M0 5h16M21 5h7M21 0v10M0 14h7M12 14h16M8 9v10M0 23h10M15 23h13M15 18v10" />
        </svg>
        Filter
      </button>
      <button type="button" className={`${outlineButton} w-[254px] pl-6`}>Versionskontrolle</button>
      <button type="button" aria-label="Sortieren" className={`${outlineButton} w-16 justify-center`}>
        <svg viewBox="0 0 18 30" className="h-[30px] w-[18px]" fill="none" stroke="currentColor" strokeWidth="2.400" aria-hidden="true">
          <path d="M1 10 9 1l8 9M1 20l8 9 8-9" />
        </svg>
      </button>
      <div className="flex">
        <button type="button" aria-label="Kacheln" aria-pressed="true" className="grid h-16 w-[62px] place-items-center rounded-l-md border-2 border-r-0 border-[#0849d0] bg-[#0d5bff]">
          <svg viewBox="0 0 22 22" className="size-[22px]" fill="#fff" aria-hidden="true">
            {[0, 8, 16].map((y) => [0, 8, 16].map((x) => <rect key={`${x}-${y}`} x={x} y={y} width="6" height="6" />))}
          </svg>
        </button>
        <button type="button" aria-label="Liste" aria-pressed="false" className="grid h-16 w-16 place-items-center rounded-r-md border-2 border-[#ced0d6] bg-white">
          <svg viewBox="0 0 24 18" className="h-[18px] w-6" stroke="#303234" strokeWidth="2.600" strokeLinecap="round" aria-hidden="true">
            <path d="M1 2h22M1 9h22M1 16h22" />
          </svg>
        </button>
      </div>
    </div>
  </div>
);

const PlanBrowser = () => (
  <div className="min-h-0 flex-1 overflow-hidden">
    <div className="-mt-[167px]">
      <CardGrid>
        <PlanCard title="C5.1 - Leitungsplan" art={<UtilitySheet />} model />
        <PlanCard title="C5.2 - Leitungsplan" art={<LegendSheet />} model />
        <PlanCard title="S2.01 - Fundament" art={<FramingSheet />} model />
        <PlanCard title="S2.02 - Dachstuhl- und..." art={<FramingSheet />} model />
        <NewPlanCard />
      </CardGrid>
      <GroupHeader name="Außenansichten" count="(2 Pläne ausgewählt)" checked />
      <CardGrid>
        <PlanCard title="Ansicht_NO" art={<ElevationNorth />} selected />
        <PlanCard title="Ansicht_SW" art={<ElevationSide />} selected />
      </CardGrid>
      <GroupHeader name="Innenansicht" count="(6 Pläne)" />
      <CardGrid>
        <PlanCard title="1.OG" art={<PlanUpper />} />
        <PlanCard title="2.OG" art={<PlanUpper lounger />} />
        <PlanCard title="3.OG" art={<PlanUpper />} />
        <PlanCard title="DG" art={<PlanAttic />} />
        <PlanCard title="EG" art={<PlanGround />} />
        <PlanCard title="Details" art={<DetailSheet />} />
        <NewPlanCard />
      </CardGrid>
    </div>
  </div>
);

/* Tutorial markers that float over the whole window. */
const Markers = () => (
  <svg className="pointer-events-none absolute inset-0 z-30 size-full" fill="none" stroke="#ff5a4b" aria-hidden="true">
    <defs>
      <filter id="markerShadow" x="0" y="0" width="2526" height="1380" filterUnits="userSpaceOnUse">
        <feDropShadow dx="0" dy="5" stdDeviation="3" floodColor="#000" floodOpacity="0.65" />
      </filter>
    </defs>
    <g filter="url(#markerShadow)" strokeWidth="12">
      <rect x="21" y="173" width="210" height="72" />
      <rect x="481" y="339" width="66" height="62" />
      <rect x="507" y="413" width="54" height="56" />
      <rect x="975" y="103" width="244" height="74" />
      <rect x="995" y="787" width="274" height="64" />
      <g strokeWidth="14" strokeLinecap="round">
        <path d="M272 251 428 321M584 381 916 165M1096 206v508" />
      </g>
      <g fill="#ff5a4b" stroke="none">
        <path d="M457 334 428 299l-2 21-14 17z" />
        <path d="M944 144l-45 5 15 16 7 19z" />
        <path d="M1096 753l-20-43 20 9 20-9z" />
      </g>
    </g>
  </svg>
);

export default function App() {
  return (
    <div className="h-screen bg-[#bfbfbf] font-['Lato',sans-serif]">
      <div className="relative flex h-full flex-col overflow-hidden rounded-b-[40px] bg-[#fafafa]">
        <div className="flex min-h-0 flex-1">
          <Sidebar />
          <main className="flex min-w-0 flex-1 flex-col bg-[#f4f5f7]">
            <TopBar />
            <Toolbar />
            <PlanBrowser />
            <footer className="mr-[30px] ml-8 flex h-[79px] shrink-0 items-center border-t-2 border-[#c9c9cb] pl-5 text-[26px] text-[#3b3d3f]">23 Pläne</footer>
          </main>
          <div className="w-[30px] shrink-0 border-l-2 border-[#e5e5e5] px-1.5 pt-[360px]">
            <div className="h-[478px] w-4 rounded-full bg-[#c1c1c1]" />
          </div>
        </div>
        <div className="h-[30px] shrink-0 border-t-2 border-b-2 border-[#e8e8e8] px-2 pt-1.5">
          <div className="h-4 w-[78%] rounded-full bg-[#bebebe]" />
        </div>
        <Markers />
      </div>
    </div>
  );
}
